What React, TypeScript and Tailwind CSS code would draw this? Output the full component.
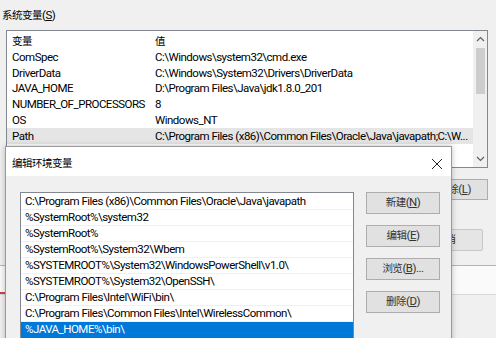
import React from "react";

const sysVars: [string, string][] = [
  ["ComSpec", "C:\\Windows\\system32\\cmd.exe"],
  ["DriverData", "C:\\Windows\\System32\\Drivers\\DriverData"],
  ["JAVA_HOME", "D:\\Program Files\\Java\\jdk1.8.0_201"],
  ["NUMBER_OF_PROCESSORS", "8"],
  ["OS", "Windows_NT"],
  ["Path", "C:\\Program Files (x86)\\Common Files\\Oracle\\Java\\javapath;C:\\W..."],
  ["PATHEXT", ".COM;.EXE;.BAT;.CMD;.VBS;.VBE;.JS;.JSE;.WSF;.WSH;.MSC"],
];

const paths = [
  "C:\\Program Files (x86)\\Common Files\\Oracle\\Java\\javapath",
  "%SystemRoot%\\system32",
  "%SystemRoot%",
  "%SystemRoot%\\System32\\Wbem",
  "%SYSTEMROOT%\\System32\\WindowsPowerShell\\v1.0\\",
  "%SYSTEMROOT%\\System32\\OpenSSH\\",
  "C:\\Program Files\\Intel\\WiFi\\bin\\",
  "C:\\Program Files\\Common Files\\Intel\\WirelessCommon\\",
  "%JAVA_HOME%\\bin\\",
];

// Chinese glyphs a touch smaller than the latin ones
function Zh({ children }: { children: React.ReactNode }) {
  return <span className="text-[10.5px]">{children}</span>;
}

function Btn({ label, hot, tail = "" }: { label: string; hot: string; tail?: string }) {
  return (
    <button className="h-[22px] w-[74px] border border-[#adadad] bg-[#e1e1e1] text-[11.5px] leading-none tracking-[-0.5px] text-[#333] [font-family:Roboto,Noto_Sans_CJK_SC,sans-serif]">
      <Zh>{label}</Zh>(<span className="underline">{hot}</span>){tail}
    </button>
  );
}

export default function App() {
  return (
    <div className="relative h-[338px] w-[496px] overflow-hidden bg-[#f0f0f0] text-[11.5px] tracking-[-0.5px] text-black [font-family:Roboto,Noto_Sans_CJK_SC,sans-serif]">
      {/* background: system variables */}
      <div className="pl-[2px] pt-[7px] leading-[16px]">
        <Zh>系统变量</Zh>(<span className="underline">S</span>)
      </div>
      <div className="ml-[6px] mt-[6px] flex h-[138px] w-[482px] border border-[#828790] bg-white">
        <div className="flex-1 overflow-hidden pt-[3px]">
          <div className="flex h-[16px] items-center leading-none">
            <span className="w-[148px] shrink-0 pl-[5px]">
              <Zh>变量</Zh>
            </span>
            <Zh>值</Zh>
          </div>
          {sysVars.map(([k, v]) => (
            <div
              key={k}
              className={`flex h-[15.7px] items-center whitespace-nowrap leading-none ${k === "Path" ? "bg-[#e5e5e5]" : ""}`}
            >
              <span className="w-[148px] shrink-0 pl-[5px]">{k}</span>
              <span>{v}</span>
            </div>
          ))}
        </div>
        <div className="flex w-[14px] shrink-0 flex-col items-center bg-[#f0f0f0]">
          <svg width="9" height="14" viewBox="0 0 9 14" className="mt-[1px]">
            <path d="M1 9 L4.5 5.5 L8 9" fill="none" stroke="#606060" strokeWidth="1.2" />
          </svg>
          <div className="mt-[2px] h-[46px] w-[9px] bg-[#cdcdcd]" />
          <div className="flex-1" />
          <svg width="9" height="14" viewBox="0 0 9 14" className="mb-[1px]">
            <path d="M1 5 L4.5 8.5 L8 5" fill="none" stroke="#606060" strokeWidth="1.2" />
          </svg>
        </div>
      </div>
      <div className="mr-[8px] mt-[11px] flex justify-end">
        <button className="h-[21px] w-[75px] border border-[#adadad] bg-[#e1e1e1] pr-[16px] text-right text-[11.5px] leading-none tracking-[-0.5px] text-[#333] [font-family:Roboto,Noto_Sans_CJK_SC,sans-serif]">
          <Zh>删除</Zh>(<span className="underline">L</span>)
        </button>
      </div>
      <div className="mr-[13px] mt-[29px] flex justify-end">
        <button className="h-[22px] w-[75px] rounded-[2px] border border-[#c8c8c8] bg-[#e5e5e5] text-[11.5px] leading-none tracking-[-0.5px] text-[#333] [font-family:Roboto,Noto_Sans_CJK_SC,sans-serif]">
          <Zh>取消</Zh>
        </button>
      </div>
      <div className="mt-[14px] h-[1px] w-full bg-[#b4b4b4]" />
      <div className="h-[28px] w-full bg-[#fafafa]" />
      <div className="h-[1px] w-full bg-[#d8d8d8]" />
      <div className="absolute left-0 top-[292px] h-[2px] w-[5px] bg-[#d04050]" />

      {/* edit environment variable dialog */}
      <div className="absolute left-[5px] top-[146px] w-[447px] border border-[#9a9a9a] bg-[#f0f0f0] shadow-[0_0_6px_rgba(0,0,0,0.25)]">
        <div className="flex h-[29px] items-center justify-between bg-white pl-[6px] pr-[8px] pt-[4px]">
          <span className="leading-none">
            <Zh>编辑环境变量</Zh>
          </span>
          <svg width="12" height="12" viewBox="0 0 12 12">
            <path d="M1 1 L11 11 M11 1 L1 11" stroke="#222" strokeWidth="1" />
          </svg>
        </div>
        <div className="flex h-[200px] pl-[14px] pt-[16px]">
          <div className="h-[200px] w-[334px] overflow-hidden border border-[#828790] bg-white pt-[1px]">
            {paths.map((p, i) => (
              <div
                key={p}
                className={`flex h-[16px] items-center whitespace-nowrap border-b pl-[4px] leading-none ${
                  i === paths.length - 1
                    ? "border-[#0078d7] bg-[#0078d7] text-white"
                    : "border-[#f0f0f0]"
                }`}
              >
                {p}
              </div>
            ))}
          </div>
          <div className="ml-[12px] flex flex-col gap-[11px]">
            <Btn label="新建" hot="N" />
            <Btn label="编辑" hot="E" />
            <Btn label="浏览" hot="B" tail="..." />
            <Btn label="删除" hot="D" />
          </div>
        </div>
      </div>
    </div>
  );
}
